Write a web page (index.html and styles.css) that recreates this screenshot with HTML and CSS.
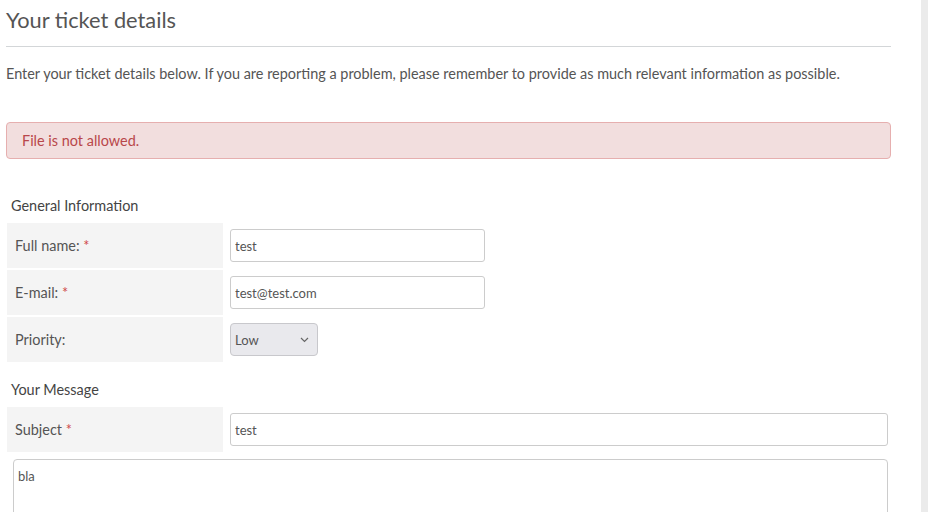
FILE: index.html
```html
<!DOCTYPE html>
<html lang="en">
<head>
<meta charset="utf-8">
<title>Your ticket details</title>
<link rel="stylesheet" href="styles.css">
</head>
<body>
<div class="page">
  <main class="main">
    <h1 class="title">Your ticket details</h1>
    <hr class="rule">
    <p class="intro">Enter your ticket details below. If you are reporting a problem, please remember to provide as much relevant information as possible.</p>
    <div class="alert">File is not allowed.</div>

    <h2 class="section">General Information</h2>
    <table class="form-table">
      <tr>
        <td class="lbl">Full name: <span class="req">*</span></td>
        <td class="fld"><input class="input short" type="text" value="test"></td>
      </tr>
      <tr>
        <td class="lbl">E-mail: <span class="req">*</span></td>
        <td class="fld"><input class="input short" type="text" value="test@test.com"></td>
      </tr>
      <tr>
        <td class="lbl">Priority:</td>
        <td class="fld">
          <div class="select">
            <span>Low</span>
            <svg class="chev" width="9" height="6" viewBox="0 0 9 6"><path d="M1 1l3.5 3.5L8 1" fill="none" stroke="#666" stroke-width="1.2"/></svg>
          </div>
        </td>
      </tr>
    </table>

    <h2 class="section second">Your Message</h2>
    <table class="form-table wide">
      <tr>
        <td class="lbl">Subject <span class="req">*</span></td>
        <td class="fld"><input class="input full" type="text" value="test"></td>
      </tr>
      <tr>
        <td class="area-cell" colspan="2"><textarea class="area">bla</textarea></td>
      </tr>
    </table>
  </main>
  <aside class="side"></aside>
</div>
</body>
</html>
```
FILE: styles.css
```css
html, body {
  margin: 0;
  padding: 0;
  overflow: hidden;
  background: #fff;
}
body {
  font-family: Lato, "Open Sans", sans-serif;
  color: #555;
}
.page {
  display: flex;
  height: 512px;
}
.main {
  width: 885px;
  padding-left: 6px;
  padding-right: 30px;
}
.side {
  flex: 1;
  background: #ebebeb;
}
.title {
  margin: 7px 0 13px;
  font-size: 21.8px;
  line-height: 26px;
  font-weight: 400;
  color: #555;
}
.rule {
  margin: 0;
  border: 0;
  border-top: 1px solid #d3d6d8;
}
.intro {
  margin: 16px 0 37px;
  font-size: 14.45px;
  line-height: 22px;
  color: #555;
}
.alert {
  border: 1px solid #e6afaf;
  background: #f2dede;
  border-radius: 4px;
  color: #b9474a;
  padding: 7px 15px;
  font-size: 14.45px;
  line-height: 21px;
}
.section {
  margin: 36px 0 4px 5px;
  font-size: 14.45px;
  line-height: 22px;
  font-weight: 400;
  color: #444;
}
.section.second {
  margin-top: 15px;
  margin-bottom: 4px;
}
.form-table {
  border-collapse: separate;
  border-spacing: 2px;
  margin-left: -1px;
}
.form-table.wide {
  width: 890px;
}
.lbl {
  width: 216px;
  height: 45px;
  box-sizing: border-box;
  background: #f4f4f4;
  padding: 0 0 0 8px;
  font-size: 14.45px;
  color: #555;
  vertical-align: middle;
}
.req {
  color: #d0494a;
}
.fld {
  padding: 0 5px;
  vertical-align: middle;
}
.input {
  display: block;
  box-sizing: border-box;
  height: 33px;
  border: 1px solid #ccc;
  border-radius: 3px;
  padding: 0 4px;
  font-family: Lato, sans-serif;
  font-size: 13px;
  color: #555;
  background: #fff;
}
.input.short {
  width: 255px;
}
.input.full {
  width: 100%;
}
.select {
  box-sizing: border-box;
  width: 88px;
  height: 33px;
  border: 1px solid #c8c8cc;
  border-radius: 4px;
  background: #e9e9ed;
  display: flex;
  align-items: center;
  justify-content: space-between;
  padding: 0 8px 0 4px;
  font-size: 13px;
  color: #555;
}
.area-cell {
  padding: 5px 5px 5px 6px;
}
.area {
  display: block;
  box-sizing: border-box;
  width: 100%;
  height: 120px;
  border: 1px solid #ccc;
  border-radius: 4px;
  padding: 8px 4px;
  font-family: Lato, sans-serif;
  font-size: 13px;
  color: #555;
  resize: none;
}
```
